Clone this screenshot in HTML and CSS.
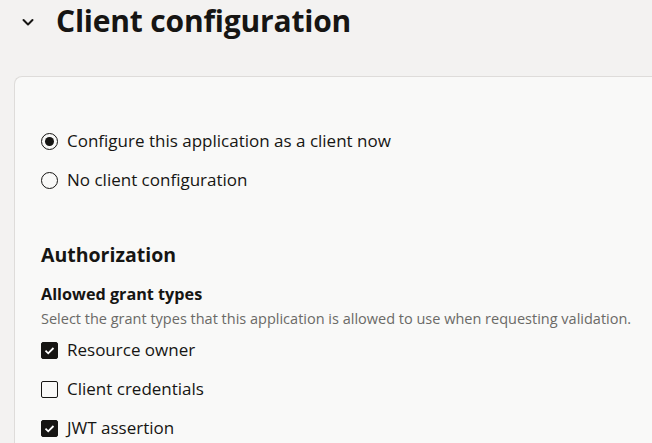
FILE: index.html
```html
<!DOCTYPE html>
<html>
<head>
<meta charset="utf-8">
<link rel="stylesheet" href="styles.css">
</head>
<body>
<div class="page">
  <header class="section-head">
    <svg class="chevron" width="16" height="16" viewBox="0 0 16 16"><path d="M3.5 6 L8 10.5 L12.5 6" fill="none" stroke="#161513" stroke-width="2" stroke-linecap="round" stroke-linejoin="round"/></svg>
    <h1 class="title">Client configuration</h1>
  </header>
  <section class="card">
    <div class="radios">
      <label class="opt"><span class="radio checked"></span><span class="lbl">Configure this application as a client now</span></label>
      <label class="opt"><span class="radio"></span><span class="lbl">No client configuration</span></label>
    </div>
    <h2 class="h2">Authorization</h2>
    <h3 class="h3">Allowed grant types</h3>
    <p class="help">Select the grant types that this application is allowed to use when requesting validation.</p>
    <div class="checks">
      <label class="opt"><span class="box checked"><svg width="17" height="17" viewBox="0 0 17 17"><path d="M4.5 8.7 L7.2 11.3 L12.5 6" fill="none" stroke="#fff" stroke-width="1.8"/></svg></span><span class="lbl">Resource owner</span></label>
      <label class="opt"><span class="box"></span><span class="lbl">Client credentials</span></label>
      <label class="opt"><span class="box checked"><svg width="17" height="17" viewBox="0 0 17 17"><path d="M4.5 8.7 L7.2 11.3 L12.5 6" fill="none" stroke="#fff" stroke-width="1.8"/></svg></span><span class="lbl">JWT assertion</span></label>
    </div>
  </section>
</div>
</body>
</html>
```
FILE: styles.css
```css
html, body { margin: 0; padding: 0; }
body {
  background: #f3f2f1;
  font-family: "Open Sans", "Noto Sans", sans-serif;
  color: #161513;
  width: 652px;
  height: 443px;
  overflow: hidden;
}
.page { padding: 0 0 0 14px; }
.section-head {
  display: flex;
  align-items: center;
  height: 42px;
  gap: 20px;
  padding-left: 6px;
}
.chevron { flex: none; margin-top: 2px; }
.title {
  margin: 0;
  font-size: 30px;
  font-weight: 700;
  line-height: 42px;
  letter-spacing: -0.2px;
}
.card {
  margin-top: 34px;
  background: #f9f9f8;
  border: 1px solid #dedcda;
  border-right: none;
  border-bottom: none;
  border-top-left-radius: 8px;
  padding: 52px 0 0 26px;
  height: 330px;
  overflow: hidden;
}
.radios { display: flex; flex-direction: column; gap: 15px; }
.opt {
  display: flex;
  align-items: center;
  gap: 9px;
  font-size: 17px;
  line-height: 24px;
}
.radio {
  width: 17px; height: 17px;
  box-sizing: border-box;
  border: 1.5px solid #161513;
  border-radius: 50%;
  display: flex; align-items: center; justify-content: center;
  flex: none;
}
.radio.checked::after {
  content: "";
  width: 9px; height: 9px;
  background: #161513;
  border-radius: 50%;
}
.h2 {
  margin: 49px 0 0;
  font-size: 19.5px;
  font-weight: 700;
  line-height: 28px;
}
.h3 {
  margin: 14px 0 0;
  font-size: 16.2px;
  font-weight: 700;
  line-height: 22px;
}
.help {
  margin: 4px 0 0;
  font-size: 14.5px;
  line-height: 20px;
  color: #6b6a67;
}
.checks { display: flex; flex-direction: column; gap: 15px; margin-top: 9px; }
.box {
  width: 17px; height: 17px;
  box-sizing: border-box;
  border: 1.5px solid #161513;
  border-radius: 2px;
  flex: none;
  display: flex; align-items: center; justify-content: center;
}
.box.checked { background: #161513; }
.box svg { flex: none; }
```
